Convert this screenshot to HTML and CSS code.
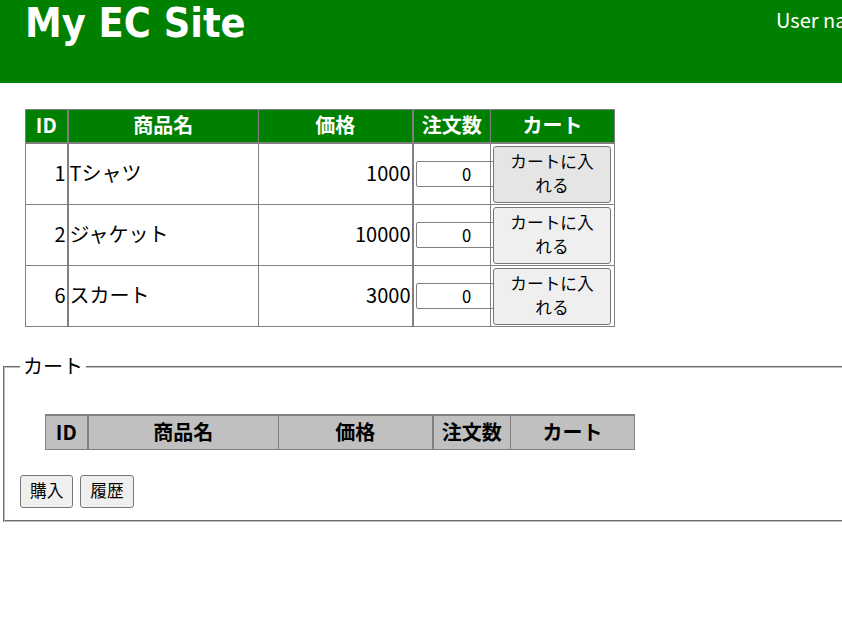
FILE: index.html
```html
<!DOCTYPE html>
<html lang="ja">
<head>
<meta charset="utf-8">
<title>My EC Site</title>
<link rel="stylesheet" href="styles.css">
</head>
<body>
<header class="site-header">
  <h1 class="site-title">My EC Site</h1>
  <div class="user">User name</div>
</header>
<main>
  <table class="grid products">
    <colgroup><col class="c-id"><col class="c-name"><col class="c-price"><col class="c-qty"><col class="c-cart"></colgroup>
    <thead>
      <tr><th>ID</th><th>商品名</th><th>価格</th><th>注文数</th><th>カート</th></tr>
    </thead>
    <tbody>
      <tr><td class="txt num">1</td><td class="txt">Tシャツ</td><td class="txt num">1000</td><td><input class="qty" type="text" value="0"></td><td><button class="add is-hover">カートに入れる</button></td></tr>
      <tr><td class="txt num">2</td><td class="txt">ジャケット</td><td class="txt num">10000</td><td><input class="qty" type="text" value="0"></td><td><button class="add">カートに入れる</button></td></tr>
      <tr><td class="txt num">6</td><td class="txt">スカート</td><td class="txt num">3000</td><td><input class="qty" type="text" value="0"></td><td><button class="add">カートに入れる</button></td></tr>
    </tbody>
  </table>
  <fieldset class="cart">
    <legend class="cart-legend">カート</legend>
    <table class="grid cart-table">
      <colgroup><col class="c-id"><col class="c-name"><col class="c-price"><col class="c-qty"><col class="c-cart"></colgroup>
      <thead>
        <tr><th>ID</th><th>商品名</th><th>価格</th><th>注文数</th><th>カート</th></tr>
      </thead>
    </table>
    <div class="actions">
      <button class="btn">購入</button>
      <button class="btn">履歴</button>
    </div>
  </fieldset>
</main>
</body>
</html>
```

FILE: styles.css
```css
html, body {
  overflow-x: hidden;
}
body {
  margin: 0;
  font-family: "Noto Sans CJK JP", sans-serif;
  font-size: 20px;
  line-height: 29px;
  color: #000;
  background: #fff;
}
.site-header {
  background: #008000;
  color: #fff;
  height: 83px;
  box-sizing: border-box;
  padding-left: 25px;
  display: grid;
  grid-template-columns: 751px max-content;
  align-items: start;
}
.site-title {
  margin: 0;
  font-family: "DejaVu Sans Condensed", "DejaVu Sans", sans-serif;
  font-stretch: condensed;
  font-weight: bold;
  font-size: 41px;
  line-height: 46px;
  white-space: nowrap;
}
.user {
  padding-top: 5px;
  font-size: 20px;
  line-height: 29px;
  white-space: nowrap;
}
.grid {
  border-collapse: collapse;
  table-layout: fixed;
  width: 589px;
  margin: 26px 25px 25px;
}
.c-id { width: 42px; }
.c-name { width: 191px; }
.c-price { width: 154px; }
.c-qty { width: 78px; }
.c-cart { width: 124px; }
.grid th,
.grid td {
  border: 1px solid #808080;
  padding: 1.5px 1px;
}
.grid th {
  padding: 0 1px 3px;
  line-height: 29px;
  font-weight: bold;
  text-align: center;
  border-bottom-width: 2px;
}
.grid th:first-child,
.grid td:first-child,
.grid th:nth-child(3),
.grid td:nth-child(3) {
  border-right-width: 2px;
}
.products th {
  background: #008000;
  color: #fff;
}
.cart-table th {
  background: #c0c0c0;
  color: #000;
  padding: 0.5px 1px 3px;
  border-top-width: 2px;
  border-bottom-width: 1px;
}
.grid td {
  text-align: left;
  vertical-align: middle;
}
.grid td.txt {
  padding: 0 1px 4px;
}
.grid td.num {
  text-align: right;
}
.qty {
  display: block;
  box-sizing: border-box;
  width: 102px;
  height: 26px;
  margin: 0 0 0 1px;
  padding: 1px 2px;
  border: 1px solid #808080;
  border-radius: 2px;
  font-family: "Noto Sans CJK JP", sans-serif;
  font-size: 16.67px;
  line-height: 20px;
  text-align: center;
  color: #000;
  background: #fff;
}
.add {
  display: block;
  box-sizing: border-box;
  width: 118px;
  height: 57px;
  margin: 0 0 0 1px;
  padding: 0 10px 2px;
  border: 1px solid #767676;
  border-radius: 3px;
  background: #efefef;
  color: #000;
  font-family: "Noto Sans CJK JP", sans-serif;
  font-size: 16.67px;
  line-height: 24px;
  text-align: center;
}
.add.is-hover {
  background: #e5e5e5;
}
.cart {
  width: 1100px;
  margin: 0 0 0 3px;
  padding: 7px 15px 12px;
  border: 2px groove #c0c0c0;
}
.cart-legend {
  padding: 0 3px 2px;
  font-size: 20px;
  line-height: 27px;
}
.actions {
  display: flex;
  gap: 7px;
}
.btn {
  box-sizing: border-box;
  height: 33px;
  padding: 0 9px 2px;
  border: 1px solid #767676;
  border-radius: 3px;
  background: #efefef;
  color: #000;
  font-family: "Noto Sans CJK JP", sans-serif;
  font-size: 16.67px;
  line-height: 24px;
}
```
